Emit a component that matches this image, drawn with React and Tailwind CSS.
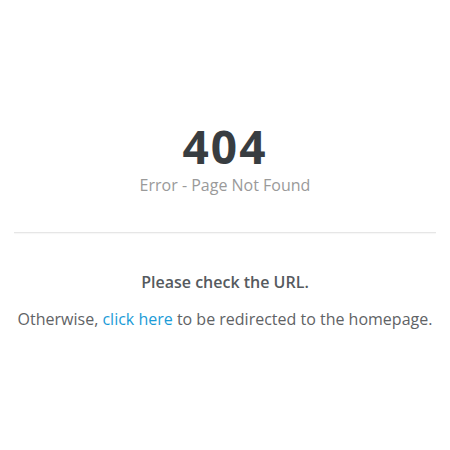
import React from 'react';

const NotFound = () => {
  return (
    <div className="min-h-screen bg-white flex flex-col items-center px-[14px] pt-[123px]" style={{ fontFamily: '"Open Sans", Lato, sans-serif' }}>
      <h1 className="text-[46px] leading-[46px] font-bold text-[#383d41] tracking-[2px]">404</h1>
      <p className="mt-[6px] text-[16px] leading-[20px] text-[#9a9a9a]">Error - Page Not Found</p>

      <hr className="w-full mt-[37px] border-0 border-t border-[#e6e6e6] shadow-[0_1px_1px_rgba(0,0,0,0.04)]" />

      <p className="mt-[39px] text-[16px] leading-[20px] font-semibold text-[#555a5e]">Please check the URL.</p>
      <p className="mt-[17px] text-[16px] leading-[20px] text-[#5f6366]">
        Otherwise, <a href="#" className="text-[#1b9bd7]">click here</a> to be redirected to the homepage.
      </p>
    </div>
  );
};

export default NotFound;
